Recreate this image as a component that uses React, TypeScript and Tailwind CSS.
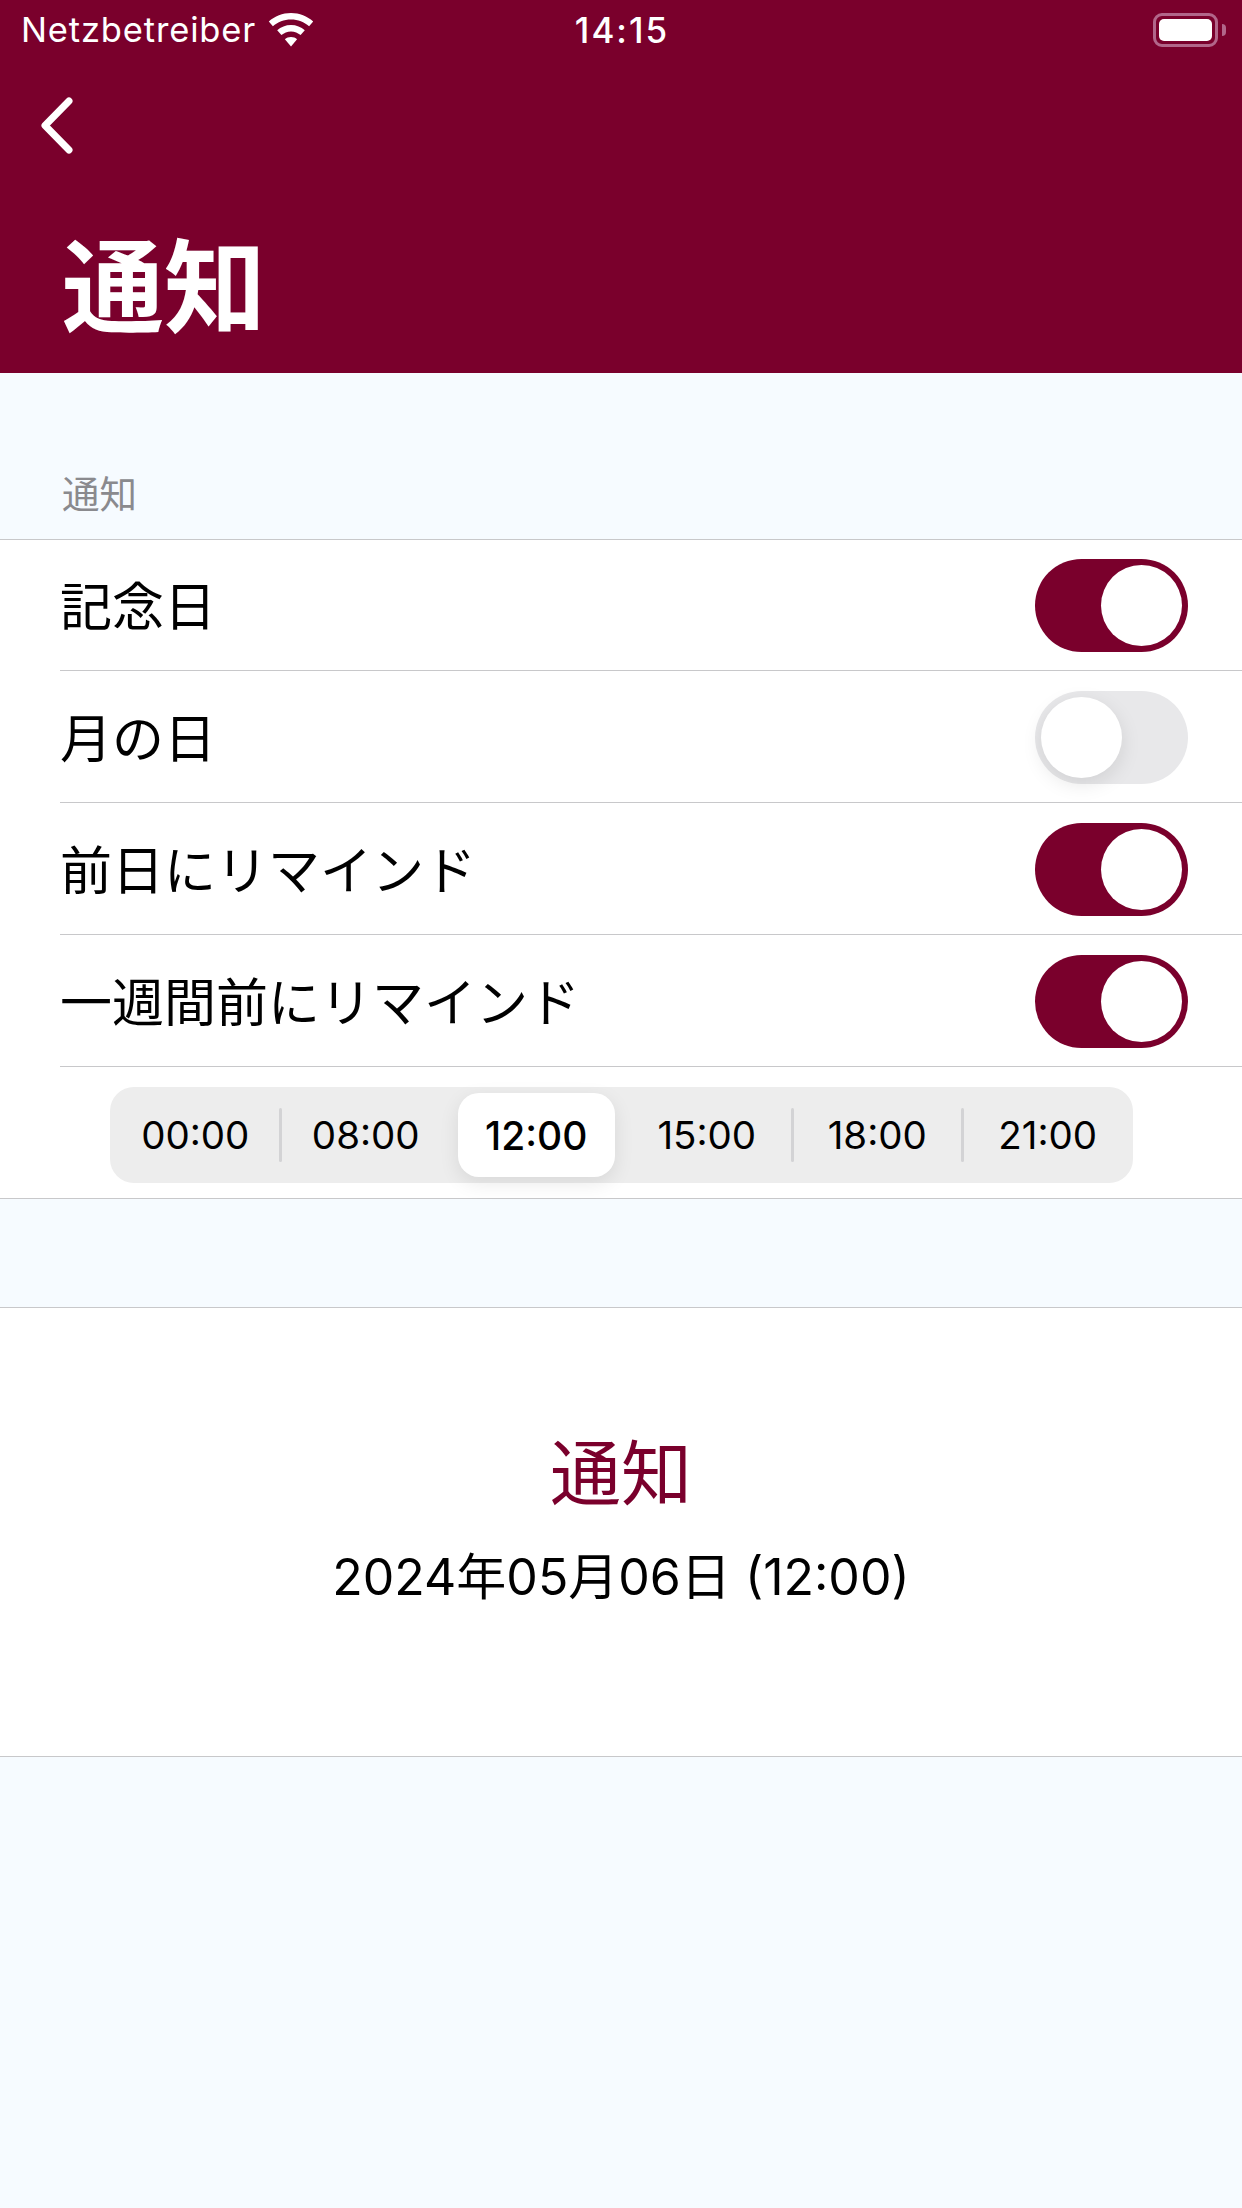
import React from 'react';

const FONT = "font-['Inter','Noto_Sans_CJK_JP',sans-serif]";

const times = ['00:00', '08:00', '12:00', '15:00', '18:00', '21:00'];
const selectedIndex = 2;

const Toggle = ({ on }: { on: boolean }) => (
  <div
    className={`flex h-[93px] w-[153px] shrink-0 items-center rounded-full p-[6px] ${
      on ? 'justify-end bg-[#7a002c]' : 'justify-start bg-[#e8e8ea]'
    }`}
  >
    <div
      className={`h-[81px] w-[81px] rounded-full bg-white ${
        on ? '' : 'shadow-[0_6px_20px_rgba(0,0,0,0.1)]'
      }`}
    />
  </div>
);

const Row = ({ label, on, first }: { label: string; on: boolean; first?: boolean }) => (
  <div
    className={`flex items-center justify-between border-b border-[#c8c8ca] pr-[54px] ${
      first ? 'h-[131px]' : 'h-[132px] pt-[2px]'
    }`}
  >
    <span className={`text-[52px] leading-none text-black ${first ? 'pt-[5px]' : 'pt-[4px]'}`}>{label}</span>
    <Toggle on={on} />
  </div>
);

const WifiIcon = () => (
  <svg width="46" height="34" viewBox="0 0 46 34" fill="#fff">
    <path d="M23 0C14.500 0 6.700 3.200 0.800 8.500L4.900 13.300C9.700 9 16 6.400 23 6.400C30 6.400 36.300 9 41.100 13.300L45.200 8.500C39.300 3.200 31.500 0 23 0Z" />
    <path d="M23 12C17.700 12 12.900 14 9.200 17.300L13.400 22.100C16 19.800 19.300 18.400 23 18.400C26.700 18.400 30 19.800 32.600 22.100L36.800 17.300C33.100 14 28.300 12 23 12Z" />
    <path d="M23 24C20.600 24 18.500 24.900 16.900 26.300L23 33.500L29.100 26.300C27.500 24.900 25.400 24 23 24Z" />
  </svg>
);

const StatusBar = () => (
  <div className="relative flex h-[60px] items-center justify-between pl-[21px] pr-[16px] text-white">
    <div className="flex items-center gap-[12px]">
      <span className="text-[34.500px] leading-none tracking-[0.85px]">Netzbetreiber</span>
      <WifiIcon />
    </div>
    <span className="absolute left-0 right-0 pl-[2px] text-center text-[35px] font-medium leading-none tracking-[2px]">14:15</span>
    <div className="flex items-center gap-[4px]">
      <div className="h-[34px] w-[65px] rounded-[9px] border-[3px] border-[#b2668a] p-[3px]">
        <div className="h-full w-full rounded-[5px] bg-white" />
      </div>
      <div className="h-[12px] w-[4px] rounded-r-full bg-[#b2668a]" />
    </div>
  </div>
);

const SegmentedTimes = () => (
  <div className="flex h-[96px] w-[1023px] items-center rounded-[24px] bg-[#ededed]">
    {times.map((t, i) => {
      const selected = i === selectedIndex;
      const showDivider = i < times.length - 1 && i !== selectedIndex && i !== selectedIndex - 1;
      return (
        <div key={t} className="relative flex h-[84px] flex-1 items-center justify-center">
          {selected && (
            <div className="absolute inset-y-0 inset-x-[7px] rounded-[21px] bg-white shadow-[0_6px_20px_rgba(0,0,0,0.09)]" />
          )}
          <span className={`relative leading-none text-black ${selected ? 'text-[39px] font-medium' : 'text-[38.500px]'}`}>
            {t}
          </span>
          {showDivider && (
            <div className="absolute right-[-1.500px] h-[54px] w-[3px] rounded-full bg-[#d3d3d5]" />
          )}
        </div>
      );
    })}
  </div>
);

export default function App() {
  return (
    <div className={`flex min-h-[2208px] w-[1242px] flex-col bg-[#f6fbff] ${FONT}`}>
      <header className="h-[373px] bg-[#7a002c]">
        <StatusBar />
        <div className="pl-[36px] pt-[34px]">
          <svg width="42" height="62" viewBox="0 0 42 62" fill="none" stroke="#fff" strokeWidth="7" strokeLinecap="round" strokeLinejoin="round">
            <path d="M33 7 L9 31.500 L33 56" />
          </svg>
        </div>
        <h1 className="pl-[62px] pt-[81px] text-[102px] font-bold leading-none text-white">通知</h1>
      </header>

      <div className="flex h-[166px] items-end pb-[26px] pl-[62px] text-[37.500px] leading-none text-[#8a8a8e]">通知</div>

      <section className="border-y border-[#c8c8ca] bg-white">
        <div className="pl-[60px]">
          <Row label="記念日" on first />
          <Row label="月の日" on={false} />
          <Row label="前日にリマインド" on />
          <Row label="一週間前にリマインド" on />
        </div>
        <div className="flex h-[131px] items-start justify-center pl-[1px] pt-[20px]">
          <SegmentedTimes />
        </div>
      </section>

      <section className="mt-[108px] flex h-[450px] flex-col items-center justify-center gap-[43px] border-y border-[#c8c8ca] bg-white pb-[25px]">
        <div className="text-[71px] leading-none text-[#7a002c]">通知</div>
        <div className="text-[50px] leading-none text-black">2024年05月06日 (12:00)</div>
      </section>
    </div>
  );
}
